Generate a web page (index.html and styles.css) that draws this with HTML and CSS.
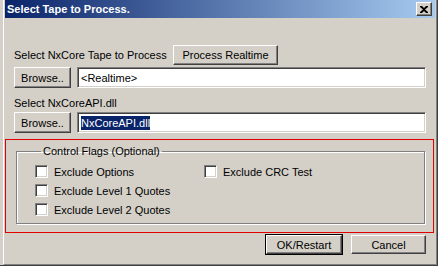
FILE: index.html
```html
<!DOCTYPE html>
<html lang="en">
<head>
<meta charset="UTF-8">
<title>Select Tape to Process.</title>
<link rel="stylesheet" href="styles.css">
</head>
<body>
	<div class="window">
		<div class="frame">
			<div class="titlebar">
				<span class="title">Select Tape to Process.</span>
				<button class="close" title="Close">
					<svg width="8" height="7" viewBox="0 0 8 7"><path d="M0 0h2l2 2 2-2h2v1L5 3.5 8 6v1H6L4 5 2 7H0V6l3-2.5L0 1z" fill="#000"/></svg>
				</button>
			</div>

			<div class="row first">
				<span class="label wide">Select NxCore Tape to Process</span>
				<button class="btn realtime">Process Realtime</button>
			</div>
			<div class="row">
				<button class="btn browse">Browse..</button>
				<div class="input">&lt;Realtime&gt;</div>
			</div>
			<div class="row caption">
				<span class="label">Select NxCoreAPI.dll</span>
			</div>
			<div class="row">
				<button class="btn browse">Browse..</button>
				<div class="input"><span class="sel">NxCoreAPI.dll</span></div>
			</div>

			<div class="highlight">
				<fieldset class="group">
					<legend>Control Flags (Optional)</legend>
					<div class="flags">
						<label class="flag"><span class="check"></span>Exclude Options</label>
						<label class="flag"><span class="check"></span>Exclude CRC Test</label>
						<label class="flag"><span class="check"></span>Exclude Level 1 Quotes</label>
						<span></span>
						<label class="flag"><span class="check"></span>Exclude Level 2 Quotes</label>
					</div>
				</fieldset>
			</div>

			<div class="actions">
				<button class="btn default">OK/Restart</button>
				<button class="btn cancel">Cancel</button>
			</div>
		</div>
	</div>
</body>
</html>
```

FILE: styles.css
```css
*{margin:0;padding:0;box-sizing:border-box;}
html,body{background:#fff;}
body{
	font-family: 'Liberation Sans', Arial, sans-serif;
	font-size: 11px;
	color:#000;
}
.window{
	width:438px;
	height:266px;
	padding:0 0 0 3px;
	background:#D4D0C8;
	border-right:1px solid #404040;
	border-bottom:1px solid #404040;
}
.frame{
	height:100%;
	padding:0 1px 0 1px;
	border-left:1px solid #fff;
	border-right:1px solid #808080;
	border-bottom:1px solid #808080;
}
.titlebar{
	display:flex;
	align-items:center;
	justify-content:space-between;
	height:18px;
	padding:0 3px 0 2px;
	background:linear-gradient(to right, #0A246A, #A6CAF0);
}
.title{color:#fff;font-weight:bold;font-size:11px;}
.close{
	display:flex;
	align-items:center;
	justify-content:center;
	width:16px;
	height:14px;
	background:#D4D0C8;
	border:1px solid;
	border-color:#fff #404040 #404040 #fff;
	box-shadow: inset -1px -1px 0 #808080;
}

.row{display:flex;align-items:center;margin-left:9px;margin-top:2px;height:21px;}
.row.first{margin-top:27px;height:20px;}
.row.caption{margin-top:8px;height:14px;}
.label.wide{width:159px;}

.btn{
	font-family:inherit;
	font-size:11px;
	color:#000;
	background:#D4D0C8;
	border:1px solid;
	border-color:#fff #404040 #404040 #fff;
	box-shadow: inset -1px -1px 0 #808080, inset 1px 1px 0 #D4D0C8;
	height:100%;
}
.realtime{width:105px;}
.browse{width:57px;margin-right:6px;}
.input{
	width:349px;
	height:100%;
	display:flex;
	align-items:center;
	padding-left:3px;
	background:#fff;
	border:1px solid;
	border-color:#808080 #fff #fff #808080;
	box-shadow: inset 1px 1px 0 #404040, inset -1px -1px 0 #D4D0C8;
}
.sel{background:#0A246A;color:#fff;padding:1px 0;}

.highlight{
	margin-top:6px;
	width:429px;
	height:94px;
	border:1px solid #E00000;
	padding:4px 8px 0 10px;
}
.group{
	height:80px;
	border:1px solid #808080;
	box-shadow: inset 1px 1px 0 #fff, 1px 1px 0 #fff;
	padding:4px 0 0 18px;
}
.group legend{margin-left:6px;padding:0 2px;line-height:14px;}
.flags{display:grid;grid-template-columns:169px auto;grid-auto-rows:19px;align-items:center;}
.flag{display:flex;align-items:center;gap:6px;}
.check{
	width:13px;
	height:13px;
	background:#fff;
	border:1px solid;
	border-color:#808080 #fff #fff #808080;
	box-shadow: inset 1px 1px 0 #404040, inset -1px -1px 0 #D4D0C8;
}

.actions{display:flex;justify-content:flex-end;gap:9px;margin-top:2px;margin-right:9px;height:19px;}
.default{width:76px;outline:1px solid #000;}
.cancel{width:75px;}
```
